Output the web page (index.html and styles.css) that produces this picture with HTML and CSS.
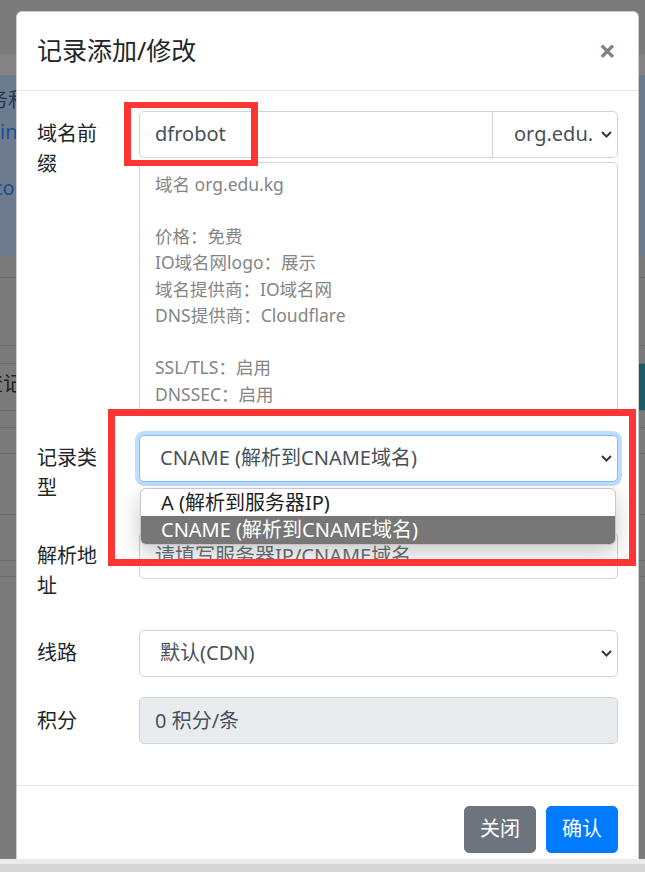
FILE: index.html
```html
<!DOCTYPE html>
<html lang="zh-CN">
<head>
<meta charset="utf-8">
<title>记录添加/修改</title>
<link rel="stylesheet" href="styles.css">
</head>
<body>
<div class="page">
  <div class="nav"></div>
  <div class="subnav"></div>
  <div class="hero">
    <p class="hero-line hero-dark">务和</p>
    <p class="hero-line hero-link hero-in">in</p>
    <p class="hero-line hero-link hero-or">cor</p>
  </div>
  <div class="band"></div>
  <div class="trow h68"></div>
  <div class="trow h18"></div>
  <div class="trow h47 teal-row"><span class="row-text">登记</span><span class="teal"></span></div>
  <div class="trow h17"></div>
  <div class="trow h26"></div>
  <div class="trow h61"></div>
  <div class="trow h46"></div>
  <div class="trow h16"></div>
</div>

<div class="modal">
  <div class="modal-header">
    <h5 class="modal-title">记录添加/修改</h5>
    <span class="close">×</span>
  </div>
  <div class="modal-body">
    <div class="form-row">
      <div class="label">域名前缀</div>
      <div class="field">
        <div class="input-group">
          <div class="control grow">dfrobot</div>
          <div class="control select suffix"><span class="select-text suffix-text">org.edu.kg</span><svg class="chev" width="11" height="7" viewBox="0 0 11 7"><path d="M1 1l4.5 4.5L10 1" fill="none" stroke="#343a40" stroke-width="2"/></svg></div>
        </div>
        <div class="textarea">域名 org.edu.kg<br><br>价格：免费<br>IO域名网logo：展示<br>域名提供商：IO域名网<br>DNS提供商：Cloudflare<br><br>SSL/TLS：启用<br>DNSSEC：启用</div>
      </div>
    </div>

    <div class="form-row">
      <div class="label">记录类型</div>
      <div class="field popup-anchor">
        <div class="control select focused"><span class="select-text">CNAME (解析到CNAME域名)</span><svg class="chev" width="11" height="7" viewBox="0 0 11 7"><path d="M1 1l4.5 4.5L10 1" fill="none" stroke="#343a40" stroke-width="2"/></svg></div>
        <div class="popup">
          <div class="option">A (解析到服务器IP)</div>
          <div class="option selected">CNAME (解析到CNAME域名)</div>
        </div>
      </div>
    </div>

    <div class="form-row">
      <div class="label">解析地址</div>
      <div class="field">
        <div class="control placeholder">请填写服务器IP/CNAME域名</div>
      </div>
    </div>

    <div class="form-row">
      <div class="label">线路</div>
      <div class="field">
        <div class="control select"><span class="select-text">默认(CDN)</span><svg class="chev" width="11" height="7" viewBox="0 0 11 7"><path d="M1 1l4.5 4.5L10 1" fill="none" stroke="#343a40" stroke-width="2"/></svg></div>
      </div>
    </div>

    <div class="form-row">
      <div class="label">积分</div>
      <div class="field">
        <div class="control readonly">0 积分/条</div>
      </div>
    </div>
  </div>
  <div class="modal-footer">
    <span class="btn btn-secondary">关闭</span>
    <span class="btn btn-primary">确认</span>
  </div>
</div>

<div class="mark mark-one"></div>
<div class="mark mark-two"></div>
<div class="bottom-bar"></div>
</body>
</html>
```
FILE: styles.css
```css
* { box-sizing: border-box; }
html, body { margin: 0; padding: 0; }
body {
  width: 645px;
  height: 872px;
  overflow: hidden;
  position: relative;
  background: #7b7b7b;
  font-family: "Noto Sans", "Noto Sans CJK SC", sans-serif;
  color: #212529;
}

/* dimmed page behind the modal */
.nav { height: 54px; background: #7b7b7b; }
.subnav { height: 21px; background: #848484; }
.hero { height: 182px; background: #6d7b8e; overflow: hidden; }
.hero-line { margin: 0; font-size: 20px; line-height: 30px; white-space: nowrap; }
.hero-dark { color: #253650; margin-top: 10px; margin-left: -12px; }
.hero-link { color: #174f92; }
.hero-in { margin-top: 2px; margin-left: 0; }
.hero-or { margin-top: 26px; margin-left: -7px; }
.band { height: 21px; background: #7b7b7b; border-bottom: 1px solid #6d6d6d; }
.trow { border-bottom: 1px solid #6d6d6d; background: #7b7b7b; }
.h68 { height: 68px; }
.h18 { height: 18px; }
.h47 { height: 47px; }
.h17 { height: 17px; }
.h26 { height: 26px; }
.h61 { height: 61px; }
.h46 { height: 46px; }
.h16 { height: 16px; }
.teal-row { display: flex; justify-content: space-between; align-items: stretch; }
.row-text { font-size: 20px; line-height: 40px; color: #222; margin-left: -17px; white-space: nowrap; }
.teal { width: 40px; background: #1c5b65; }

/* modal */
.modal {
  position: absolute;
  left: 16px;
  top: 11px;
  width: 623px;
  background: #fff;
  border: 1px solid rgba(0, 0, 0, 0.2);
  border-radius: 6px;
}
.modal-header {
  display: flex;
  align-items: flex-start;
  justify-content: space-between;
  padding: 20px;
  border-bottom: 1px solid #e3e6e9;
}
.modal-title {
  margin: 0;
  font-size: 25px;
  line-height: 37.5px;
  font-weight: 400;
  color: #212529;
}
.close {
  font-size: 30px;
  line-height: 37.5px;
  font-weight: 700;
  color: #808080;
  margin-right: 2px;
}
.modal-body { padding: 20px; }
.form-row {
  display: grid;
  grid-template-columns: 102px 1fr;
  align-items: start;
  margin-bottom: 20px;
}
.label {
  font-size: 20px;
  line-height: 30px;
  padding: 8.75px 36px 8.75px 0;
  color: #212529;
}
.field { min-width: 0; }
.popup-anchor { position: relative; }

.control {
  height: 47px;
  border: 1px solid #ced4da;
  border-radius: 5px;
  padding: 7.5px 15px;
  font-size: 20px;
  line-height: 30px;
  color: #495057;
  background: #fff;
  white-space: nowrap;
  overflow: hidden;
}
.select {
  display: flex;
  align-items: center;
  padding-left: 20px;
  padding-right: 5px;
}
.select-text { flex: 1; overflow: hidden; white-space: nowrap; }
.chev { flex: none; margin-left: 13px; }
.input-group { display: flex; }
.grow { flex: 1; border-radius: 5px 0 0 5px; }
.suffix { width: 126px; margin-left: -1px; border-radius: 0 5px 5px 0; padding-left: 21px; }
.suffix-text { flex: none; width: 79px; }
.suffix .chev { margin-left: auto; }
.focused {
  border-color: #80bdff;
  box-shadow: 0 0 0 4px rgba(0, 123, 255, 0.25);
}
.placeholder { color: #6c757d; }
.readonly { background: #e9ecef; }

.textarea {
  margin-top: 4.5px;
  height: 252.5px;
  border: 1px solid #ced4da;
  border-radius: 5px;
  padding: 7.5px 15px;
  font-size: 17.5px;
  line-height: 26.25px;
  color: #858585;
  overflow: hidden;
}

.popup {
  position: absolute;
  top: 53px;
  left: 1px;
  right: 2px;
  background: #fff;
  border: 1px solid #c6c6c6;
  border-radius: 6px;
  box-shadow: 0 8px 22px rgba(0, 0, 0, 0.22);
  overflow: hidden;
  z-index: 2;
}
.option {
  height: 27.5px;
  padding-left: 20px;
  font-size: 20px;
  line-height: 27.5px;
  color: #222;
  white-space: nowrap;
}
.option.selected { background: #777; color: #fff; }

.modal-footer {
  display: flex;
  justify-content: flex-end;
  padding: 15px;
  border-top: 1px solid #e3e6e9;
}
.btn {
  margin: 5px;
  padding: 7.5px 15px;
  font-size: 20px;
  line-height: 30px;
  border: 1px solid transparent;
  border-radius: 5px;
  color: #fff;
}
.btn-secondary { background: #6c757d; border-color: #6c757d; }
.btn-primary { background: #007bff; border-color: #007bff; }

/* red annotation boxes */
.mark {
  position: absolute;
  border-style: solid;
  border-color: #fe3535;
  z-index: 5;
}
.mark-one { left: 124px; top: 102px; width: 134px; height: 64px; border-width: 6px 7px; }
.mark-two { left: 108px; top: 409px; width: 528px; height: 157px; border-width: 7px 7px; }

.bottom-bar {
  position: absolute;
  left: 0;
  right: 0;
  bottom: 0;
  height: 13px;
  background: #d6d6d6;
  border-top: 5px solid #ebebeb;
  z-index: 6;
}
```
